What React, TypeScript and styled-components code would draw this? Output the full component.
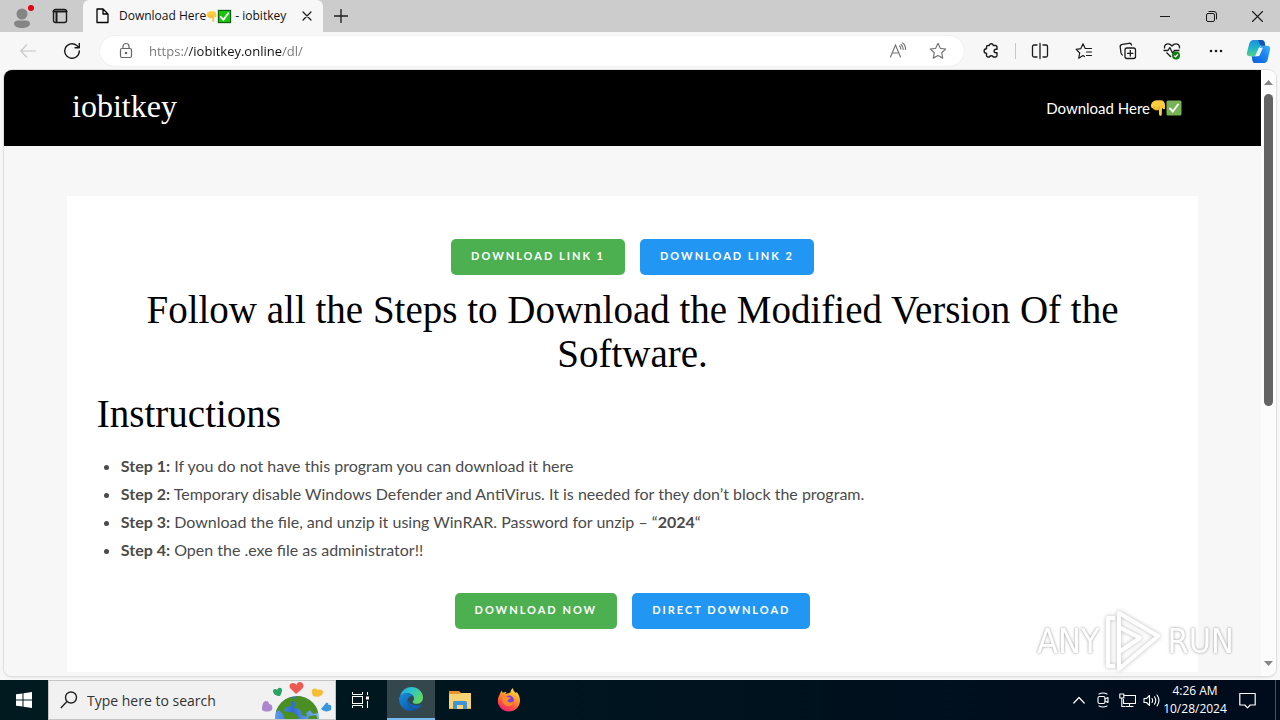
import React from 'react';
import styled, { createGlobalStyle } from 'styled-components';

const ui = `"Open Sans", "Noto Sans", sans-serif`;
const serif = `"Liberation Serif", serif`;
const body = `Lato, "Liberation Sans", sans-serif`;

const GlobalStyle = createGlobalStyle`
  *, *::before, *::after { box-sizing: border-box; }
  body { margin: 0; background: #f7f7f7; font-family: ${ui}; }
  button { border: 0; padding: 0; background: none; font: inherit; color: inherit; cursor: pointer; }
  svg { display: block; flex: none; }
`;

const Desktop = styled.div`
  position: relative;
  display: flex;
  flex-direction: column;
  height: 100vh;
  overflow: hidden;
  background: #f7f7f7;
`;

/* ---------- title bar ---------- */
const TitleBar = styled.header`
  display: flex;
  flex: none;
  height: 32px;
  background: #cccccc;
`;
const TitleTools = styled.div`
  display: flex;
  width: 83px;
  padding-left: 3px;
`;
const TitleButton = styled.button<{ $width?: number }>`
  display: flex;
  align-items: center;
  justify-content: center;
  width: ${(p) => p.$width ?? 38}px;
  height: 32px;
  color: #1b1b1b;
`;
const Tab = styled.div`
  display: flex;
  align-items: center;
  width: 240px;
  padding: 0 8px 0 11px;
  border-radius: 6px 6px 0 0;
  background: #f7f7f7;
`;
const TabTitle = styled.span`
  display: flex;
  align-items: center;
  flex: 1;
  margin-left: 9px;
  font-size: 12px;
  line-height: 16px;
  color: #111;
  white-space: pre;
`;
const WindowControls = styled.div`
  display: flex;
  margin-left: auto;
`;

/* ---------- toolbar ---------- */
const Toolbar = styled.nav`
  display: flex;
  flex: none;
  align-items: center;
  height: 38px;
  padding: 0 2px 0 6px;
  background: #f7f7f7;
`;
const ToolButton = styled.button<{ $width?: number }>`
  display: flex;
  align-items: center;
  justify-content: center;
  flex: none;
  width: ${(p) => p.$width ?? 44}px;
  height: 32px;
  color: #1b1b1b;
`;
const AddressBar = styled.form`
  display: flex;
  flex: 1;
  align-items: center;
  height: 30px;
  margin: 0 4px 0 6px;
  padding: 0 6px 0 18px;
  border-radius: 15px;
  background: #fff;
  box-shadow: 0 0 2px #e2e2e2;
`;
/* the host part of the address is darker than its scheme and path */
const AddressInput = styled.input`
  flex: 1;
  min-width: 0;
  height: 24px;
  margin-left: 15px;
  padding: 0;
  border: 0;
  outline: 0;
  font: 13px ${ui};
  color: transparent;
  background: linear-gradient(90deg, #757575 0 40px, #111 40px 133px, #757575 133px);
  background-clip: text;
  -webkit-background-clip: text;
`;
const Divider = styled.span`
  width: 1px;
  height: 16px;
  margin: 0 2px 0 1px;
  background: #c8c8c8;
`;

/* ---------- page view ---------- */
const View = styled.div`
  display: flex;
  flex: 1;
  min-height: 0;
  margin: 0 4px 4px;
  border-radius: 8px;
  overflow: hidden;
  background: #fff;
  box-shadow: 0 0 0 1px #e0e0e0, 0 1px 2px #c8c8c8;
`;
const Page = styled.div`
  flex: 1;
  min-width: 0;
  overflow: hidden;
  display: flex;
  flex-direction: column;
  padding-bottom: 4px;
  background: #f7f7f7;
`;
const SiteHeader = styled.div`
  display: flex;
  flex: none;
  align-items: center;
  justify-content: space-between;
  height: 76px;
  padding: 0 79px 0 68px;
  background: #000;
`;
const SiteName = styled.a`
  padding-bottom: 4px;
  font-family: ${serif};
  font-size: 32px;
  line-height: 40px;
  color: #fff;
  text-decoration: none;
`;
const SiteLink = styled.a`
  display: flex;
  align-items: center;
  font-family: ${body};
  font-size: 15px;
  line-height: 20px;
  color: #fff;
  text-decoration: none;
`;
const Card = styled.main`
  flex: 1;
  width: 90%;
  margin: 50px auto 0;
  padding: 43px 30px 0;
  background: #fff;
`;
const ButtonRow = styled.div`
  display: flex;
  justify-content: center;
  gap: 15px;
`;
const DownloadButton = styled.button<{ $color: string }>`
  height: 36px;
  padding: 0 20px 3px;
  border-radius: 5px;
  background: ${(p) => p.$color};
  font-family: ${body};
  font-size: 11px;
  font-weight: 700;
  letter-spacing: 2px;
  text-transform: uppercase;
  color: #fff;
`;
const Heading = styled.h2<{ $center?: boolean }>`
  margin: ${(p) => (p.$center ? '13px 0 0' : '16px 0 0')};
  font-family: ${serif};
  font-size: 39px;
  font-weight: 400;
  line-height: 44px;
  text-align: ${(p) => (p.$center ? 'center' : 'left')};
  color: #000;
`;
const Steps = styled.ul`
  margin: 16px 0 29px;
  padding-left: 24px;
  font-family: ${body};
  font-size: 16px;
  line-height: 28px;
  color: #4b4b4b;
`;

const Scrollbar = styled.div`
  display: flex;
  flex-direction: column;
  align-items: center;
  width: 15px;
  padding: 9px 0;
  background: #fcfcfc;
`;
const Track = styled.div`
  flex: 1;
  width: 9px;
  margin: 8px 0;
`;
const Thumb = styled.div`
  height: 56%;
  border-radius: 5px;
  background: #636363;
`;

/* ---------- watermark ---------- */
const Watermark = styled.div`
  position: absolute;
  right: 46px;
  bottom: 46px;
  display: flex;
  align-items: center;
  gap: 6px;
  font-family: "DejaVu Sans Condensed", "DejaVu Sans", sans-serif;
  font-size: 34px;
  line-height: 66px;
  color: #fff;
  text-shadow: 0 0 3px #999, 0 0 2px #bbb;
  opacity: 0.8;
  pointer-events: none;
  svg { filter: drop-shadow(0 0 2px #aaa); }
`;

/* ---------- task bar ---------- */
const TaskBar = styled.footer`
  display: flex;
  flex: none;
  height: 40px;
  background: linear-gradient(90deg, #001a20, #00141f 50%, #000b1c);
  color: #fff;
`;
const TaskButton = styled.button<{ $active?: boolean; $width?: number }>`
  display: flex;
  align-items: center;
  justify-content: center;
  width: ${(p) => p.$width ?? 48}px;
  height: 40px;
  background: ${(p) => (p.$active ? '#33474d' : 'transparent')};
  border-bottom: ${(p) => (p.$active ? '2px solid #76b9ed' : '0')};
`;
const TaskApps = styled.div`
  display: flex;
  gap: 1px;
`;
const Search = styled.label`
  display: flex;
  align-items: center;
  width: 288px;
  padding-left: 11px;
  border: 1px solid #c4c4c4;
  background: #f1f1f1;
`;
const SearchInput = styled.input`
  flex: 1;
  min-width: 0;
  margin-left: 9px;
  padding: 0;
  border: 0;
  outline: 0;
  background: transparent;
  font: 14px ${ui};
  color: #333;
  &::placeholder { color: #333; opacity: 1; }
`;
const Tray = styled.div`
  display: flex;
  margin-left: auto;
  padding-right: 4px;
`;
const Clock = styled.button`
  display: flex;
  flex-direction: column;
  align-items: center;
  justify-content: center;
  width: 64px;
  font-size: 12px;
  line-height: 18px;
  white-space: nowrap;
`;
const ShowDesktop = styled.div`
  width: 1px;
  margin-left: 8px;
  background: #46505c;
`;

/* ---------- drawings ---------- */
type LineProps = { size?: number; w?: number; children: React.ReactNode };
const Line = ({ size = 18, w = 1.2, children }: LineProps) => (
  <svg width={size} height={size} viewBox={`0 0 ${size} ${size}`} fill="none" stroke="currentColor" strokeWidth={w} strokeLinecap="round" strokeLinejoin="round" aria-hidden="true">
    {children}
  </svg>
);

const PointDown = ({ size }: { size: number }) => (
  <svg width={size} height={size} viewBox="0 0 16 16" role="img" aria-label="pointing down">
    <path d="M1 5C1.500 2 4 .3 7.500.3h3c3 0 4.500 2 4.500 5v3c0 1-1.300 1.300-2 .4l-1-.7-.2 6.500c0 1.800-2.600 1.800-2.700 0L8.800 9.500C7.500 10.800 6 10.500 5.500 9.800 4.300 10 3.400 9.300 3.300 8.400 1.500 8.300.7 6.800 1 5z" fill="#ffcc3d" />
    <path d="M3.200 8.300l2.300-1.600M5.500 9.800l2.200-2M8.800 9.500c.6-.8.700-2 .2-3" stroke="#d9912a" strokeWidth=".9" fill="none" />
  </svg>
);
const CheckMark = ({ size, dark }: { size: number; dark?: boolean }) => (
  <svg width={size} height={size} viewBox="0 0 16 16" role="img" aria-label="check">
    {dark ? (
      <rect x="1.500" y="1.500" width="13" height="13" fill="#16c60c" stroke="#0b5c10" strokeWidth="1.200" />
    ) : (
      <rect x=".5" y=".5" width="15" height="15" rx="1.500" fill="#77b255" />
    )}
    <path d="M4 8.500l2.800 3L12 4.500" stroke="#fff" strokeWidth="1.900" fill="none" strokeLinecap="round" />
  </svg>
);
const Avatar = () => (
  <svg width="26" height="28" viewBox="0 0 26 28" aria-hidden="true">
    <circle cx="13" cy="12" r="5.500" fill="#858585" />
    <path d="M5 21.500c0-2 2-3 4-3h8c2 0 4 1 4 3 0 3-4 4.500-8 4.500s-8-1.500-8-4.500z" fill="#858585" />
    <circle cx="22" cy="6" r="3" fill="#e3000f" />
  </svg>
);
const Copilot = () => (
  <svg width="25" height="25" viewBox="0 0 26 26" aria-hidden="true">
    <defs>
      <linearGradient id="cpA" x1="0" y1="0" x2="0" y2="1">
        <stop offset="0" stopColor="#1c8fe0" />
        <stop offset=".5" stopColor="#1fb5c9" />
        <stop offset="1" stopColor="#5ad08a" />
      </linearGradient>
      <linearGradient id="cpB" x1="0" y1="1" x2="1" y2="0">
        <stop offset="0" stopColor="#0c5fd8" />
        <stop offset=".6" stopColor="#1d86f0" />
        <stop offset="1" stopColor="#45b8f5" />
      </linearGradient>
    </defs>
    <path d="M8 1h8c2 0 3 1 3.500 3l.5 3h-3c-2 0-3 1-3.500 2.700L12 15c-.7 2-1.800 3-4 3H4c-2.500 0-3.600-1.600-3-4L3.500 4.500C4.200 2.300 5.500 1 8 1z" fill="url(#cpA)" />
    <path d="M18 25h-8c-2 0-3-1-3.500-3L6 18h3c2 0 3-1 3.500-2.700L14 10c.7-2 1.800-3 4-3h4c2.500 0 3.600 1.600 3 4l-2.500 10.500c-.7 2.200-2 3.500-4.500 3.500z" fill="url(#cpB)" />
    <path d="M14 9h3.500l-3 7.500c-.4 1-1 1.500-2 1.500H9.500l3-7c.3-1.200.7-2 1.500-2z" fill="#e9f8ff" />
    <path d="M12 1h4c2 0 3 1 3.500 3l.5 3h-3c-2 0-2.600-.8-3-2.300C13.600 3 13 1.300 12 1z" fill="#1552b5" />
  </svg>
);
const Windows = () => (
  <svg width="16" height="16" viewBox="0 0 16 16" fill="#fff" aria-hidden="true">
    <path d="M0 2.300L6.500 1.400V7.500H0zM7.500 1.200L16 0v7.500H7.500zM0 8.500h6.500v6.100L0 13.700zM7.500 8.500H16V16l-8.500-1.200z" />
  </svg>
);
const Globe = () => (
  <svg width="74" height="38" viewBox="0 0 74 38" aria-hidden="true">
    <defs>
      <linearGradient id="sea" x1="0" y1="0" x2="1" y2="0">
        <stop offset="0" stopColor="#5f9dee" />
        <stop offset=".4" stopColor="#2f6cd0" />
        <stop offset="1" stopColor="#7fb7f4" />
      </linearGradient>
      <clipPath id="globe"><circle cx="36" cy="37" r="22" /></clipPath>
    </defs>
    <circle cx="36" cy="37" r="22" fill="url(#sea)" />
    <g clipPath="url(#globe)" fill="#4a8f22">
      <path d="M17 25c4-6 9-9 14-9l3 3-4 2 1 4-6 1-2 4 5 1v2h-6l-4-4-4 3z" />
      <path d="M35 15c9-1 16 3 21 11l1 6-5 1-3-4-4 3 1 4-5-2-2-6-6-1 2-5-3-2z" />
      <path d="M22 32l9-1 6 4 1 4H24zM48 35l7-1 2 5H47z" />
    </g>
    <path d="M35 13l-5-5c-3-3-1-6 2-6 2 0 3 1 3.500 2C36 2 37 1 39 1c3 0 5 4 2 7z" fill="#ee5a52" />
    <path d="M19 15c-4 0-7-2-7-5 0-2 3-3 4-1 1-3 5-3 5 0 0 2-1 4-2 6z" fill="#28a466" />
    <path d="M52 15c-1-3-2-6 0-7 2-1 4 0 5 1 2-1 5 0 5 2 0 4-5 6-10 4z" fill="#f8bd35" />
    <path d="M1 29c0-5 1-9 4-9 2 0 3 1 3 3 3 0 4 3 3 6-3 2-7 2-10 0z" fill="#ad86d0" />
    <path d="M60 28l5-6c2-1 3 1 2 2 3-1 4 1 3 5-3 2-7 2-10-1z" fill="#3998dc" />
  </svg>
);
const Edge = () => (
  <svg width="24" height="24" viewBox="0 0 24 24" aria-hidden="true">
    <defs>
      <linearGradient id="edA" x1="0" y1="0" x2="1" y2=".5">
        <stop offset="0" stopColor="#27a5e5" />
        <stop offset=".5" stopColor="#2cc3c9" />
        <stop offset="1" stopColor="#61d865" />
      </linearGradient>
      <linearGradient id="edB" x1="0" y1="0" x2="1" y2="1">
        <stop offset="0" stopColor="#168fe0" />
        <stop offset="1" stopColor="#0b4f9f" />
      </linearGradient>
    </defs>
    <path d="M1 9C2.500 3.500 7 0 12.200 0 19 0 24 5 24 10.500c0 4-3 6.300-6.300 6.300-2.800 0-4-1-4-1.900 0-.8 1.300-1.200 1.300-3.400C15 8.500 12 6.300 8.500 6.300 5 6.300 2.500 7.500 1 9z" fill="url(#edA)" />
    <path d="M.2 10.500C1.500 7.500 5 6 8.500 6.300c2.500.2 4.500 1.300 5.500 2.800-2-.6-5.500 1-5.500 5 0 4.900 4.500 8.400 9 7.900.8 0-2.200 2-5.500 2C5 24-.8 18 .2 10.500z" fill="url(#edB)" />
    <path d="M8.800 12.500c-1 5 3.200 9.700 8.700 9.500 2-.6 4-2.200 5-4.200.2-.5-.2-.7-.6-.5-1.200.6-2.500 1-4 1-5 0-8.300-2.500-9.100-5.800z" fill="#135fb3" />
  </svg>
);
const Explorer = () => (
  <svg width="22" height="18" viewBox="0 0 22 18" aria-hidden="true">
    <path d="M0 0h10l2 2h10v16H0z" fill="#e9952a" />
    <path d="M0 3h10l2-1h10v16H0z" fill="#f9d373" />
    <path d="M4 18v-6c0-1.500.8-2 2-2h10c1.200 0 2 .5 2 2v6h-4v-4H8v4z" fill="#3f94d6" />
    <path d="M0 17h4v1H0zM18 17h4v1h-4z" fill="#eeb63a" />
  </svg>
);
const Firefox = () => (
  <svg width="24" height="24" viewBox="0 0 24 24" aria-hidden="true">
    <defs>
      <linearGradient id="ffA" x1=".8" y1="0" x2=".3" y2="1">
        <stop offset="0" stopColor="#ffe54a" />
        <stop offset=".4" stopColor="#ff9a2b" />
        <stop offset=".75" stopColor="#ff4a45" />
        <stop offset="1" stopColor="#ee1f7c" />
      </linearGradient>
    </defs>
    <path d="M2.500 7C3 5 4 3.500 5 2.500c0 1 .3 1.800.7 2.200C7 4 8.500 4 9.500 4.200 8.800 5 8.500 5.500 8.500 6l5-1.500C13.500 3 14.300 1 16 0c0 2.500 1.500 3.500 3 5l.8-1c2 2.500 3.200 5.500 3.200 8.500C23 19 18 23.500 12 23.500S.8 19 .8 12.800C.8 10.500 1.500 8.500 2.500 7z" fill="url(#ffA)" />
    <circle cx="12" cy="12.500" r="5" fill="#7b3fdd" />
    <path d="M5.500 9c2-1.500 4-1 5.500.3 1.500 0 2.500.3 2.500 1-.3 1-2.500 1-3 2.200.7 2.500 4 2.500 6.500.5-1 4-4 5.200-6.500 5-4-.5-6.500-4.500-5-9z" fill="#ff8a2a" />
  </svg>
);
const PlayMark = () => (
  <svg width="56" height="62" viewBox="0 0 56 62" fill="none" stroke="#fff" strokeWidth="4" strokeLinejoin="round" aria-hidden="true">
    <path d="M14 3L53 26 14 59z" />
    <path d="M14 17l21 11-21 14" />
    <path d="M10 8H3v48h7" />
  </svg>
);

const green = '#4caf50';
const blue = '#2196f3';

const steps: { label: string; text: React.ReactNode }[] = [
  { label: 'Step 1:', text: 'If you do not have this program you can download it here' },
  { label: 'Step 2:', text: 'Temporary disable Windows Defender and AntiVirus. It is needed for they don’t block the program.' },
  { label: 'Step 3:', text: <>Download the file, and unzip it using WinRAR. Password for unzip – “<strong>2024</strong>“</> },
  { label: 'Step 4:', text: 'Open the .exe file as administrator!!' },
];

export default function App() {
  return (
    <Desktop>
      <GlobalStyle />
      <TitleBar>
        <TitleTools>
          <TitleButton aria-label="Profile"><Avatar /></TitleButton>
          <TitleButton aria-label="Tab actions">
            <Line size={16} w={1.4}>
              <rect x="1.500" y="1.500" width="13" height="13" rx="2" />
              <path d="M1.500 3.500h13M4.500 4v10" strokeWidth="2" />
            </Line>
          </TitleButton>
        </TitleTools>
        <Tab>
          <Line size={16} w={1.3}>
            <path d="M3 1h6l5 5v8.500H3zM9 1v5h5" />
          </Line>
          <TabTitle>Download Here<PointDown size={11} /><CheckMark size={15} dark /> - iobitkey</TabTitle>
          <TitleButton $width={16} aria-label="Close tab">
            <Line size={10} w={1.2}><path d="M1 1l8 8M9 1L1 9" /></Line>
          </TitleButton>
        </Tab>
        <TitleButton $width={35} aria-label="New tab">
          <Line size={14} w={1.3}><path d="M7 .5v13M.5 7h13" /></Line>
        </TitleButton>
        <WindowControls>
          <TitleButton $width={46} aria-label="Minimize"><Line size={10} w={1}><path d="M0 5.500h10" /></Line></TitleButton>
          <TitleButton $width={46} aria-label="Restore">
            <Line size={11} w={1}><rect x=".5" y="2.500" width="8" height="8" rx="1.500" /><path d="M3 .5h5a2.500 2.500 0 0 1 2.500 2.500v5" /></Line>
          </TitleButton>
          <TitleButton $width={46} aria-label="Close"><Line size={11} w={1.1}><path d="M.5.5l10 10M10.500.5l-10 10" /></Line></TitleButton>
        </WindowControls>
      </TitleBar>

      <Toolbar>
        <ToolButton aria-label="Back" disabled>
          <svg width="16" height="14" viewBox="0 0 16 14" fill="none" stroke="#c6c6c6" strokeWidth="1.200" aria-hidden="true"><path d="M7 .5L.8 7 7 13.500M1 7h15" /></svg>
        </ToolButton>
        <ToolButton aria-label="Refresh">
          <Line size={18} w={1.4}><path d="M16.300 9A7.300 7.300 0 1 1 13.800 3.500L16 5.500M16.300 1.500v4.200H12" /></Line>
        </ToolButton>
        <AddressBar onSubmit={(e) => e.preventDefault()}>
          <svg width="16" height="18" viewBox="0 0 16 18" fill="none" stroke="#666" strokeWidth="1.200" aria-hidden="true">
            <rect x="2.500" y="6.500" width="11" height="9" rx="1.500" />
            <path d="M5 6.500V4.500a3 3 0 0 1 6 0v2" />
            <circle cx="8" cy="11" r=".7" fill="#666" />
          </svg>
          <AddressInput aria-label="Address" defaultValue="https://iobitkey.online/dl/" spellCheck={false} />
          <ToolButton type="button" $width={40} aria-label="Read aloud">
            <svg width="18" height="18" viewBox="0 0 18 18" fill="none" stroke="#777" strokeWidth="1.200" strokeLinecap="round" aria-hidden="true">
              <path d="M1.500 15L6.500 3l5 12M3.200 11h6.600M10.500 4c1 .8 1.300 2 1.200 3M12 2.500c1.600 1.200 2.300 3 2.200 5M13.500 1C15.800 2.500 16.700 5 16.500 7.500" />
            </svg>
          </ToolButton>
          <ToolButton type="button" $width={40} aria-label="Add to favorites">
            <svg width="18" height="18" viewBox="0 0 18 18" fill="none" stroke="#777" strokeWidth="1.200" strokeLinejoin="round" aria-hidden="true">
              <path d="M9 1.300l2.300 5 5.400.7-4 3.700 1 5.400L9 13.500l-4.700 2.600 1-5.400-4-3.700 5.400-.7z" />
            </svg>
          </ToolButton>
        </AddressBar>
        <ToolButton $width={46} aria-label="Extensions">
          <Line size={16} w={1.4}><path d="M5 2.500h1.300C6.500 1.300 7.300.8 8.300.8s1.800.5 2 1.700H12.500a1.500 1.500 0 0 1 1.500 1.500v2.200h-1c-1.200 0-1.900.8-1.900 1.800s.7 1.800 1.900 1.800h1V12.500a1.500 1.500 0 0 1-1.500 1.500h-2.200c-.2-.9-1-1.300-2-1.300s-1.800.4-2 1.300H5A1.500 1.500 0 0 1 3.500 12.500v-2.300C1.900 10.200 1.100 9.200 1.100 8s.8-2.200 2.400-2.200V4A1.500 1.500 0 0 1 5 2.500z" /></Line>
        </ToolButton>
        <Divider />
        <ToolButton aria-label="Split screen">
          <Line size={18} w={1.3}><path d="M6 3H3a1.500 1.500 0 0 0-1.500 1.500v9A1.500 1.500 0 0 0 3 15h3M12 3h3a1.500 1.500 0 0 1 1.500 1.500v9A1.500 1.500 0 0 1 15 15h-3M9 1.500v15" /></Line>
        </ToolButton>
        <ToolButton aria-label="Favorites">
          <Line size={18} w={1.2}><path d="M9.500 14.500L8 13.500l-4.300 2.700 1-5.200L1.200 7.300l4.700-.7L8 1.800l2.200 4.700h6.300M11.500 10h5M11.500 13.500h5" /></Line>
        </ToolButton>
        <ToolButton aria-label="Collections">
          <Line size={18} w={1.3}><rect x="6" y="6" width="10.500" height="10.500" rx="2" /><path d="M11.300 8.500v5.500M8.500 11.300H14M3.500 13A2.500 2.500 0 0 1 2 11L1.200 5C1 3.500 2 2.500 3.300 2.300L10 1.300c1.300-.2 2.300.5 2.500 1.700" /></Line>
        </ToolButton>
        <ToolButton aria-label="Browser essentials">
          <svg width="18" height="18" viewBox="0 0 18 18" fill="none" stroke="#1b1b1b" strokeWidth="1.300" strokeLinejoin="round" aria-hidden="true">
            <path d="M1.500 6.500C1 3.500 3 1.800 5 1.800c1.800 0 3 .8 4 2.200 1-1.400 2.200-2.200 4-2.200 2 0 4 1.700 3.500 4.700M3.500 10.500L8 15M.5 8.500H5l1.800-3L9.500 11l2-2.500h5" />
            <circle cx="13" cy="13.500" r="4" fill="#107c10" stroke="none" />
            <path d="M11.200 13.600l1.300 1.300 2.400-2.600" stroke="#fff" />
          </svg>
        </ToolButton>
        <ToolButton aria-label="Settings and more">
          <svg width="14" height="4" viewBox="0 0 14 4" fill="#1b1b1b" aria-hidden="true"><circle cx="2" cy="2" r="1.300" /><circle cx="7" cy="2" r="1.300" /><circle cx="12" cy="2" r="1.300" /></svg>
        </ToolButton>
        <ToolButton $width={40} aria-label="Copilot"><Copilot /></ToolButton>
      </Toolbar>

      <View>
        <Page>
          <SiteHeader>
            <SiteName href="#home">iobitkey</SiteName>
            <SiteLink href="#download">Download Here<PointDown size={16} /><CheckMark size={16} /></SiteLink>
          </SiteHeader>
          <Card>
            <ButtonRow>
              <DownloadButton $color={green}>Download Link 1</DownloadButton>
              <DownloadButton $color={blue}>Download Link 2</DownloadButton>
            </ButtonRow>
            <Heading $center>Follow all the Steps to Download the Modified Version Of the Software.</Heading>
            <Heading>Instructions</Heading>
            <Steps>
              {steps.map((s) => (
                <li key={s.label}><strong>{s.label}</strong> {s.text}</li>
              ))}
            </Steps>
            <ButtonRow>
              <DownloadButton $color={green}>Download Now</DownloadButton>
              <DownloadButton $color={blue}>Direct Download</DownloadButton>
            </ButtonRow>
          </Card>
        </Page>
        <Scrollbar>
          <svg width="9" height="7" viewBox="0 0 9 7" aria-hidden="true"><path d="M0 6l4.500-5L9 6z" fill="#858585" /></svg>
          <Track><Thumb /></Track>
          <svg width="9" height="7" viewBox="0 0 9 7" aria-hidden="true"><path d="M0 1l4.500 5L9 1z" fill="#858585" /></svg>
        </Scrollbar>
      </View>

      <TaskBar>
        <TaskButton aria-label="Start"><Windows /></TaskButton>
        <Search>
          <svg width="18" height="18" viewBox="0 0 18 18" fill="none" stroke="#222" strokeWidth="1.400" aria-hidden="true"><circle cx="11" cy="6.500" r="5.500" /><path d="M7 10.500L.8 17" /></svg>
          <SearchInput aria-label="Search" placeholder="Type here to search" />
          <Globe />
        </Search>
        <TaskApps>
          <TaskButton $width={50} aria-label="Task view">
            <svg width="18" height="18" viewBox="0 0 18 18" fill="none" stroke="#fff" strokeWidth="1" aria-hidden="true">
              <rect x=".5" y="5.500" width="10" height="7" /><path d="M.5 1v2.500h10V1M.5 17v-2.500h10V17M15.500 1v3M15.500 10v7" /><path d="M14 5.500h3v3h-3z" fill="#fff" stroke="none" />
            </svg>
          </TaskButton>
          <TaskButton $active aria-label="Microsoft Edge"><Edge /></TaskButton>
          <TaskButton aria-label="File Explorer"><Explorer /></TaskButton>
          <TaskButton aria-label="Firefox"><Firefox /></TaskButton>
        </TaskApps>
        <Tray>
          <TaskButton $width={24} aria-label="Show hidden icons"><Line size={12} w={1.2}><path d="M.8 9L6 3.500 11.200 9" /></Line></TaskButton>
          <TaskButton $width={24} aria-label="Meet now">
            <Line size={16} w={1.1}><rect x="3" y="4.500" width="7" height="7" rx="1.500" /><path d="M10 7l3-1.500v5L10 9M4 2c2.500-1.300 5.500-1.300 8 0M4 14c2.500 1.300 5.500 1.300 8 0" /></Line>
          </TaskButton>
          <TaskButton $width={24} aria-label="Network">
            <Line size={17} w={1.1}><path d="M5.500 3.500h11v8h-12V7.500M10.500 11.500v3M7 14.500h7M.8 2h4v4h-4zM2.800 6v8.500h3" /></Line>
          </TaskButton>
          <TaskButton $width={24} aria-label="Volume">
            <Line size={17} w={1.1}><path d="M1 6.500h2.500l3-3v10l-3-3H1zM9 6.500c.8 1.300.8 2.700 0 4M11.500 4.800c1.600 2.400 1.600 5 0 7.400M14 3c2.500 3.500 2.500 7.500 0 11" /></Line>
          </TaskButton>
          <Clock><span>4:26 AM</span><span>10/28/2024</span></Clock>
          <TaskButton $width={40} aria-label="Notifications">
            <Line size={17} w={1.2}><path d="M.8 1.500h15.400v11.500h-5L8.500 15.800 5.800 13h-5z" /></Line>
          </TaskButton>
          <ShowDesktop />
        </Tray>
      </TaskBar>

      <Watermark><span>ANY</span><PlayMark /><span>RUN</span></Watermark>
    </Desktop>
  );
}
